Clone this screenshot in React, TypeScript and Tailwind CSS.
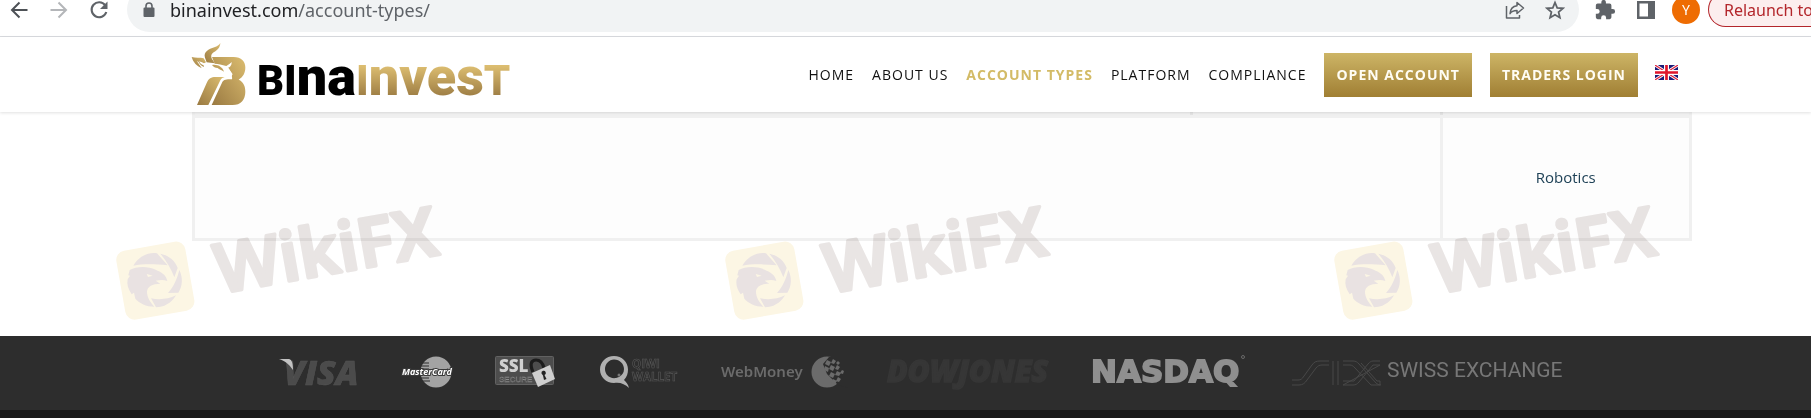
import type { ReactNode } from "react";

const SANS = "font-['Open_Sans','Noto_Sans',sans-serif]";

function BrowserBar() {
  return (
    <div className="h-[37px] overflow-hidden border-b border-[#dadce0] bg-white font-['Noto_Sans',sans-serif]">
      <div className="-mt-[13px] flex h-[45px] items-center">
        <div className="flex w-[127px] shrink-0 items-center gap-5 pl-[9px]">
          <button aria-label="Back" className="text-[#4d5156]">
            <svg width="20" height="20" viewBox="0 0 20 20" fill="none" stroke="currentColor" strokeWidth="2">
              <path d="M18.500 10H3.500M10.500 2.500L3 10l7.500 7.500" />
            </svg>
          </button>
          <button aria-label="Forward" className="text-[#b4b6b9]">
            <svg width="20" height="20" viewBox="0 0 20 20" fill="none" stroke="currentColor" strokeWidth="2">
              <path d="M1.500 10h15M9.500 2.500L17 10l-7.500 7.500" />
            </svg>
          </button>
          <button aria-label="Reload" className="text-[#5f6368]">
            <svg width="20" height="20" viewBox="0 0 20 20" fill="none">
              <path d="M16.200 5.300A7.500 7.500 0 1 0 17.300 12" stroke="currentColor" strokeWidth="2.100" />
              <path d="M18.500 1.500v7.500H11z" fill="currentColor" />
            </svg>
          </button>
        </div>
        <div className="flex h-full min-w-0 flex-1 items-center rounded-full bg-[#f1f3f4] pl-4 pr-[14px] text-[#5f6368]">
          <svg className="shrink-0" width="12" height="16" viewBox="0 0 12 16">
            <path d="M1.500 5.500h9a1 1 0 0 1 1 1V14a1 1 0 0 1-1 1h-9a1 1 0 0 1-1-1V6.500a1 1 0 0 1 1-1z" fill="#5f6368" />
            <path d="M3 6V4a3 3 0 0 1 6 0v2" fill="none" stroke="#5f6368" strokeWidth="1.600" />
          </svg>
          <div role="textbox" aria-label="Address" className="ml-[15px] flex-1 whitespace-nowrap text-lg">
            <span className="text-[#202124]">binainvest.com</span>/account-types/
          </div>
          <button aria-label="Share" className="mr-5">
            <svg width="20" height="20" viewBox="0 0 20 20" fill="none" stroke="currentColor" strokeWidth="1.500" strokeLinejoin="round">
              <path d="M1.500 6v12h13v-3" />
              <path d="M12 2.500l6.500 5.500-6.500 5.500V10.500c-3.500 0-5.800 1-7 3.200.3-4.500 2.800-7.500 7-8z" />
            </svg>
          </button>
          <button aria-label="Bookmark">
            <svg width="20" height="20" viewBox="0 0 20 20" fill="none" stroke="currentColor" strokeWidth="1.800">
              <path d="M10 2.500l2.200 5.300 5.700.5-4.300 3.800 1.300 5.600-4.900-3-4.900 3 1.300-5.600-4.300-3.800 5.700-.5z" />
            </svg>
          </button>
        </div>
        <div className="flex h-full w-[232px] shrink-0 items-center pl-[15px] text-[#5f6368]">
          <button aria-label="Extensions" className="mr-5">
            <svg width="22" height="22" viewBox="0 0 24 24" fill="currentColor">
              <path d="M20.500 11H19V7a2 2 0 0 0-2-2h-4V3.500a2.500 2.500 0 0 0-5 0V5H4a2 2 0 0 0-2 2v3.800h1.500a2.700 2.700 0 0 1 0 5.400H2V20a2 2 0 0 0 2 2h3.800v-1.500a2.700 2.700 0 0 1 5.400 0V22H17a2 2 0 0 0 2-2v-4h1.500a2.500 2.500 0 0 0 0-5z" />
            </svg>
          </button>
          <button aria-label="Side panel" className="mr-4">
            <svg width="20" height="20" viewBox="0 0 20 20">
              <path fill="currentColor" fillRule="evenodd" d="M1 1h18v18H1zM3.500 3.500v13H12v-13z" />
            </svg>
          </button>
          <button aria-label="Profile" className="mr-2 size-7 shrink-0 rounded-full bg-[#ee6c02] text-sm text-white">
            Y
          </button>
          <button className="h-[35px] flex-1 whitespace-nowrap rounded-l-full border border-r-0 border-[#b3262b] bg-[#fceeee] pl-[15px] text-left text-base text-[#b3262b]">
            Relaunch to
          </button>
        </div>
      </div>
    </div>
  );
}

function Logo() {
  return (
    <a href="#home" aria-label="Binainvest" className="flex items-center">
      <svg width="66" height="66" viewBox="15 8 198 198">
        <defs>
          <linearGradient id="gold" x1="1" y1="0" x2="0" y2="1">
            <stop offset="0" stopColor="#dcbd70" />
            <stop offset="1" stopColor="#9a7a42" />
          </linearGradient>
        </defs>
        <g fill="url(#gold)">
          <path d="M78 53H143C166 53 178 66 178 84C178 102 171 113 158 121C172 127 178 140 178 157C178 181 164 197 140 197H77L108 130C112 122 118 119 138 120C140 114 135 110 140 105L126 84L136 70L121 80C108 76 97 73 86 73Z" />
          <path d="M33 197L62 131C68 117 76 113 88 113H116C111 114 106 117 103 123L67 197Z" />
          <path d="M103 11C102 25 95 32 83 39C72 46 75 56 82 65L86 72L62 69L57 55C52 38 68 29 85 24C94 21 99 17 103 11Z" />
          <path d="M17 53C29 56 42 54 53 57L60 69C51 72 48 78 49 87C33 82 21 68 17 53Z" />
        </g>
        <path d="M51 71L71 78L80 72L128 88L138 105L134 117L116 113L90 108L62 115L51 92L33 66Z" fill="#fff" />
        <path d="M78 77C95 74 110 83 114 97C106 90 100 92 95 86C88 86 82 83 78 77ZM36 64L51 68L54 83C45 79 39 73 36 64Z" fill="url(#gold)" />
        <path d="M39 66C45 67 52 70 58 76L52 78C46 76 42 72 39 66Z" fill="#fff" />
        <path d="M123 82L137 68C137 79 132 83 125 86Z" fill="#fff" />
      </svg>
      <span className="flex items-baseline pt-2 font-['Roboto',sans-serif] text-[54px] font-black leading-[60px]">
        <span className="text-[42px]">BI</span>
        <span>na</span>
        <span className="bg-linear-to-b from-[#dcbd70] from-30% to-[#9a7a42] to-80% bg-clip-text text-transparent">
          <span className="text-[42px]">I</span>nves<span className="text-[42px]">T</span>
        </span>
      </span>
    </a>
  );
}

function Flag() {
  return (
    <svg width="23" height="15" viewBox="0 0 60 40" preserveAspectRatio="none">
      <path fill="#1b1b78" d="M0 0h60v40H0z" />
      <path d="M0 0l60 40M60 0L0 40" stroke="#fff" strokeWidth="8" />
      <path d="M0 0l60 40M60 0L0 40" stroke="#e0203a" strokeWidth="3" />
      <path d="M30 0v40M0 20h60" stroke="#fff" strokeWidth="13" />
      <path d="M30 0v40M0 20h60" stroke="#e0162b" strokeWidth="7" />
    </svg>
  );
}

const LINKS = ["Home", "About us", "Account types", "Platform", "Compliance"];

function SiteHeader() {
  return (
    <header className="relative z-10 flex h-[75px] items-center justify-between bg-white pl-[191px] pr-[133px] shadow-[0_1px_3px_rgba(0,0,0,0.12)]">
      <Logo />
      <nav className={`${SANS} flex items-center text-sm font-medium uppercase tracking-[1px] text-[#111]`}>
        {LINKS.map((label) => (
          <a
            key={label}
            href={`#${label}`}
            className={label === "Account types" ? "mr-[18px] font-bold text-[#d3bb66]" : "mr-[18px]"}
          >
            {label}
          </a>
        ))}
        <a href="#open" className="mr-[18px] bg-linear-to-b from-[#cdb566] to-[#a07f33] px-3 py-3 font-bold text-[#fffdf4]">
          Open account
        </a>
        <a href="#login" className="mr-[17px] bg-linear-to-b from-[#cdb566] to-[#a07f33] px-3 py-3 font-bold text-[#fffdf4]">
          Traders login
        </a>
        <a href="#language" aria-label="English" className="pb-1">
          <Flag />
        </a>
      </nav>
    </header>
  );
}

function Watermark() {
  return (
    <svg className="w-[360px] shrink-0" height="140" viewBox="0 0 1080 420">
      <rect x="64" y="167" width="210" height="210" rx="28" fill="#fcf6e4" transform="rotate(-10 169 272)" />
      <g fill="#e9e2e2">
        <path d="M103 227C120 198 150 185 174 190L206 226C165 222 130 222 103 227Z" />
        <path d="M184 191C207 195 229 212 236 234L226 262C217 237 202 213 184 191Z" />
        <path d="M241 240C253 265 250 290 238 308L207 309C224 290 235 265 241 240Z" />
        <path d="M156 325C180 330 208 328 231 316C216 341 194 352 171 352Z" />
        <path d="M92 240C112 229 146 228 170 239C186 246 202 254 205 273C192 268 181 271 170 272L184 281C160 281 145 289 144 305C144 322 154 336 166 350C141 350 122 340 109 326L105 308L98 313C87 297 83 283 86 268L93 257L88 256Z" />
      </g>
      <path d="M143 252l18 5-14 4z" fill="#fcf6e4" />
      <text
        x="352"
        y="343"
        transform="rotate(-10 169 272)"
        fontFamily="'Noto Sans', sans-serif"
        fontWeight="600"
        fontSize="205"
        fill="#e9e5e4"
        stroke="#e9e5e4"
        strokeWidth="10"
        strokeLinejoin="round"
      >
        WikiFX
      </text>
    </svg>
  );
}

function AccountTable() {
  return (
    <main className="relative h-[224px] overflow-hidden bg-white pl-[192px] pr-[119px]">
      <table className={`${SANS} w-full table-fixed border-collapse bg-[#fdfdfd] text-center text-[15px] text-[#1f4257]`}>
        <tbody>
          <tr className="h-1 bg-[#f3f3f3]">
            <td colSpan={4} className="border-[3px] border-t-0 border-[#f0f0f0] border-r-[#e6e6e6] p-0" />
            <td className="border-[3px] border-t-0 border-[#f0f0f0] border-r-[#e6e6e6] p-0" />
            <td className="border-[3px] border-t-0 border-[#f0f0f0] p-0" />
          </tr>
          <tr className="h-[123px]">
            <td colSpan={5} className="border-[3px] border-[#f0f0f0] p-0" />
            <td className="border-[3px] border-[#f0f0f0] p-0">Robotics</td>
          </tr>
        </tbody>
      </table>
      <div aria-hidden="true" className="pointer-events-none absolute left-[99px] top-[78px] flex gap-[249px] mix-blend-multiply">
        <Watermark />
        <Watermark />
        <Watermark />
      </div>
    </main>
  );
}

function Mark({ width, className, label, children }: { width: number; className: string; label: string; children: ReactNode }) {
  return (
    <svg className={className} width={width} height="34" viewBox={`0 0 ${width} 34`} role="img" aria-label={label} overflow="visible">
      {children}
    </svg>
  );
}

function Partners() {
  return (
    <footer>
      <div className="flex h-[74px] items-center justify-between bg-[#2d2d2d] pb-1 pl-[279px] pr-[250px]">
        <Mark width={77} className="shrink-0" label="Visa">
          <text x="5" y="31" fontFamily="'Open Sans', sans-serif" fontWeight="800" fontStyle="italic" fontSize="34" fill="#4b4b4b" stroke="#555" strokeWidth=".5">
            VISA
          </text>
          <path d="M0 5H9C12 5 14 7 14 16C10 10 6 7 0 5Z" fill="#c2c2c2" />
        </Mark>
        <Mark width={48} className="shrink-0" label="MasterCard">
          <circle cx="34" cy="18" r="15.500" fill="#a3a3a3" />
          <path d="M19 9h8M19 12h8M18 15h9M18 21h9M19 24h8M20 27h8" stroke="#2d2d2d" strokeWidth="1.200" />
          <text x="0" y="21" fontFamily="'Noto Sans', sans-serif" fontWeight="700" fontStyle="italic" fontSize="9" fill="#fff" stroke="#3a3a3a" strokeWidth="2" paintOrder="stroke">
            MasterCard
          </text>
        </Mark>
        <Mark width={59} className="shrink-0" label="SSL Secure">
          <rect x=".5" y="2.500" width="58" height="28" rx="1" fill="#4d4d4d" stroke="#626262" />
          <text x="4" y="18" fontFamily="'Open Sans', sans-serif" fontWeight="800" fontSize="17" fill="#d0d0d0">
            SSL
          </text>
          <text x="4" y="28" fontFamily="'Liberation Sans', sans-serif" fontSize="8" fill="#333" stroke="#8a8a8a" strokeWidth=".4">
            SECURE
          </text>
          <path d="M38 18C34 9 37 6 41 6C46 6 48 10 49 14" fill="none" stroke="#1c1c1c" strokeWidth="3.200" />
          <path d="M37 19L55 11L60 25L43 33Z" fill="#cfcfcf" />
          <path d="M46.500 19.500a2.200 2.200 0 1 1 3 1.500l2 4-2.500 1-1-4.500z" fill="#222" />
        </Mark>
        <Mark width={77} className="shrink-0" label="QIWI Wallet">
          <path fill="#b0b0b0" fillRule="evenodd" d="M14 2C6 2 0 8 0 15.500S6 29 14 29C20 28 25 30 29 34C28 30 26 28 24 26C27 23 28 19 28 15.500C28 8 22 2 14 2ZM14 5.500C20 5.500 24 10 24 15C24 19 22 21 19 23L16 24C9 25 5 20 5 15C5 10 9 5.500 14 5.500Z" />
          <circle cx="19" cy="21" r="1.500" fill="#777" />
          <text fontFamily="'Open Sans', sans-serif" fontWeight="700" fontSize="11.500" fill="#2d2d2d" stroke="#585858" strokeWidth=".6">
            <tspan x="32" y="14">QIWI</tspan>
            <tspan x="32" y="27">WALLET</tspan>
          </text>
        </Mark>
        <Mark width={122} className="shrink-0" label="WebMoney">
          <text x="-1" y="23" fontFamily="'Noto Sans', sans-serif" fontWeight="600" fontSize="15" fill="#6b6b6b">
            WebMoney
          </text>
          <circle cx="105" cy="18" r="15.500" fill="#6b6b6b" />
          <path d="M101 10L107 3L127 3L127 34L116 31L105 20Z" fill="#2d2d2d" />
          <path
            fill="#6b6b6b"
            d="M105 6l4 2-2 4-4-2zM111 5l3 2-2 3-3-1zM116 7l2 2-2 2-2-2zM103 12l4 2-1 4-4-2zM109 11l4 2-2 4-4-2zM115 11l3 2-2 3-3-1zM109 18l4 2-2 4-4-2zM115 17l4 2-2 3-4-1zM120 16l2 1-1 3-3-1zM111 25l4 2-2 3-4-1zM116 23l3 2-2 3-3-1z"
          />
        </Mark>
        <Mark width={159} className="shrink-0" label="Dow Jones">
          <text x="-3" y="28" fontFamily="'Open Sans', sans-serif" fontWeight="800" fontStyle="italic" fontSize="30" fill="#363636" stroke="#363636" strokeWidth="1.500">
            DOWJONES
          </text>
        </Mark>
        <Mark width={151} className="shrink-0" label="Nasdaq">
          <text x="-3" y="28" fontFamily="'DejaVu Sans', sans-serif" fontWeight="700" fontSize="31" fill="#8f8f8f" stroke="#8f8f8f" strokeWidth="1.800">
            NASDAQ
          </text>
          <circle cx="149" cy="3" r="1.500" fill="none" stroke="#777" strokeWidth=".8" />
        </Mark>
        <Mark width={270} className="shrink-0" label="SIX Swiss Exchange">
          <g fill="none" stroke="#484848" strokeWidth="1">
            <path d="M1 26H7C10 26 11 25 13 22L21 11C23 8 25 7 29 7H38M1 31H8C12 31 14 29 16 26L25 14C27 12 28 11 31 11H38" />
            <path d="M42 7v24M47 7v24M52 7H62C65 7 66 8 68 10L85 29C86 30 88 31 90 31M52 11H59C61 11 62 12 64 14L80 31H89V27H86L70 9M89 7H82C80 7 79 8 77 10L63 27H52M52 31H62C65 31 66 30 68 28L82 11H89Z" />
          </g>
          <text x="96" y="23" fontFamily="'Roboto', sans-serif" fontSize="21" fill="#777">
            SWISS EXCHANGE
          </text>
        </Mark>
      </div>
      <div className="h-2 bg-[#1b1b1b]" />
    </footer>
  );
}

export default function App() {
  return (
    <div className="overflow-hidden bg-white">
      <BrowserBar />
      <SiteHeader />
      <AccountTable />
      <Partners />
    </div>
  );
}
